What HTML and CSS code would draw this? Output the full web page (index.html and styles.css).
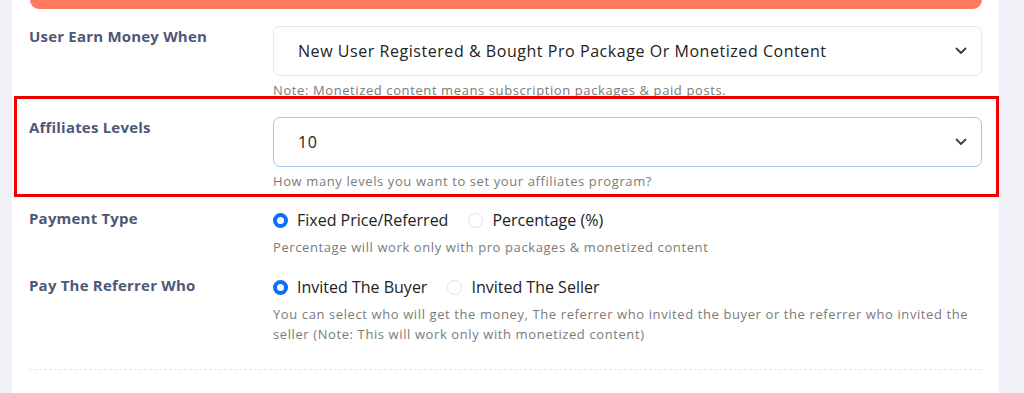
FILE: index.html
```html
<!DOCTYPE html>
<html lang="en">
<head>
  <meta charset="UTF-8" />
  <title>Affiliate Settings</title>
  <link rel="stylesheet" href="styles.css">
</head>
<body>
  <div class="card">
    <div class="top-bar"></div>

    <div class="row">
      <label class="label">User Earn Money When</label>
      <div class="field">
        <div class="select">
          <span>New User Registered &amp; Bought Pro Package Or Monetized Content</span>
          <svg class="chevron" width="12" height="8" viewBox="0 0 12 8"><path d="M1.5 1.5 6 6l4.5-4.5" fill="none" stroke="#3a3f4a" stroke-width="1.8" stroke-linecap="round" stroke-linejoin="round"/></svg>
        </div>
        <p class="help">Note: Monetized content means subscription packages &amp; paid posts.</p>
      </div>
    </div>

    <div class="row highlighted">
      <label class="label">Affiliates Levels</label>
      <div class="field">
        <div class="select focus">
          <span>10</span>
          <svg class="chevron" width="12" height="8" viewBox="0 0 12 8"><path d="M1.5 1.5 6 6l4.5-4.5" fill="none" stroke="#3a3f4a" stroke-width="1.8" stroke-linecap="round" stroke-linejoin="round"/></svg>
        </div>
        <p class="help">How many levels you want to set your affiliates program?</p>
      </div>
    </div>

    <div class="row radio-row">
      <label class="label">Payment Type</label>
      <div class="field">
        <div class="radios">
          <span class="radio checked"></span><span class="opt">Fixed Price/Referred</span>
          <span class="radio"></span><span class="opt">Percentage (%)</span>
        </div>
        <p class="help">Percentage will work only with pro packages &amp; monetized content</p>
      </div>
    </div>

    <div class="row radio-row">
      <label class="label">Pay The Referrer Who</label>
      <div class="field">
        <div class="radios">
          <span class="radio checked"></span><span class="opt">Invited The Buyer</span>
          <span class="radio"></span><span class="opt">Invited The Seller</span>
        </div>
        <p class="help">You can select who will get the money, The referrer who invited the buyer or the referrer who invited the seller (Note: This will work only with monetized content)</p>
      </div>
    </div>

    <hr class="divider">
  </div>
</body>
</html>
```

FILE: styles.css
```css
* {
  box-sizing: border-box;
  margin: 0;
  padding: 0;
}

body {
  background: #f0f1f6;
  font-family: 'Open Sans', 'DejaVu Sans', sans-serif;
  height: 393px;
  overflow: hidden;
}

.card {
  margin-left: 12px;
  width: 987px;
  height: 393px;
  background: #fff;
  padding: 0 17px;
}

.top-bar {
  height: 9px;
  margin-left: 1px;
  background: #ff7b5f;
  border-radius: 0 0 12px 12px;
  margin-bottom: 17px;
}

.row {
  display: grid;
  grid-template-columns: 244px 709px;
  position: relative;
}

.label {
  font-size: 15px;
  font-weight: 700;
  color: #4d5877;
  letter-spacing: 0.2px;
  line-height: 20px;
}

.select {
  height: 50px;
  border: 1px solid #e6e8ec;
  border-radius: 7px;
  display: flex;
  align-items: center;
  justify-content: space-between;
  padding: 0 14px 0 24px;
  font-size: 16px;
  letter-spacing: 0.55px;
  color: #222;
}

.select.focus {
  border-color: #9ec8f5;
}

.help {
  font-size: 13px;
  color: #7b7b7b;
  letter-spacing: 0.6px;
  line-height: 20px;
  margin-top: 4px;
}

.highlighted {
  margin-top: 17px;
}

.highlighted::before {
  content: "";
  position: absolute;
  left: -15px;
  right: -17px;
  top: -21px;
  bottom: -6px;
  border: 3px solid #ee0000;
  pointer-events: none;
}

.radio-row {
  margin-top: 19px;
}

.radio-row .label {
  margin-top: -2px;
}

.radio-row + .radio-row {
  margin-top: 20px;
}

.radios {
  display: flex;
  align-items: center;
  font-size: 16px;
  color: #222;
  line-height: 20px;
}

.radio {
  width: 15px;
  height: 15px;
  border-radius: 50%;
  border: 1px solid #dfe2e6;
  margin-right: 9px;
}

.radio.checked {
  border: 4px solid #0d6efd;
}

.opt {
  margin-right: 20px;
}

.radio-row .help {
  margin-top: 7px;
}

.divider {
  border: 0;
  border-top: 1px dashed #e2e5ea;
  margin-top: 25px;
}
```
